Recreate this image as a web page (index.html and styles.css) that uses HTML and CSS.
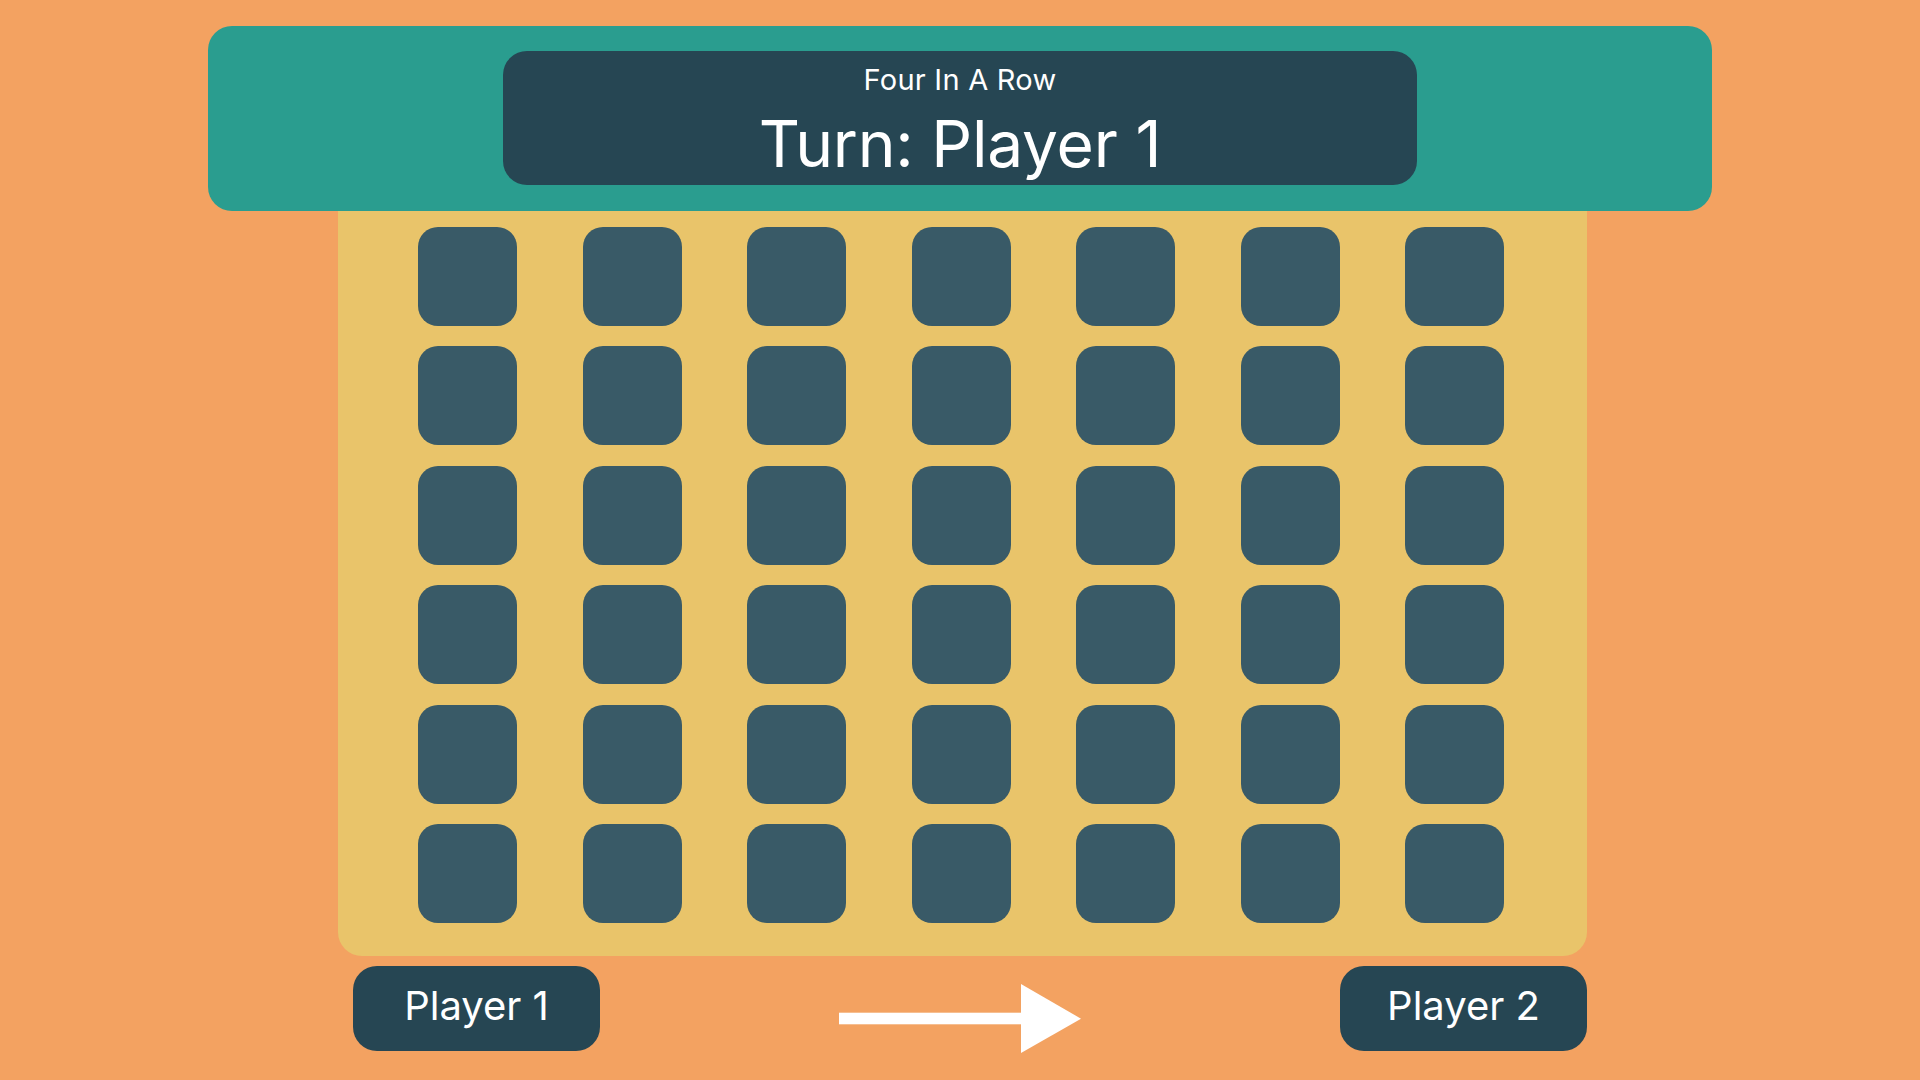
FILE: index.html
```html
<!DOCTYPE html>
<html lang="en">
<head>
<meta charset="utf-8">
<title>Four In A Row</title>
<link rel="stylesheet" href="styles.css">
</head>
<body>
<main class="app">
  <header class="top">
    <div class="title-box">
      <div class="title">Four In A Row</div>
      <div class="turn">Turn: Player 1</div>
    </div>
  </header>
  <section class="board">
    <div class="grid">
      <div class="cell"></div><div class="cell"></div><div class="cell"></div><div class="cell"></div><div class="cell"></div><div class="cell"></div><div class="cell"></div>
      <div class="cell"></div><div class="cell"></div><div class="cell"></div><div class="cell"></div><div class="cell"></div><div class="cell"></div><div class="cell"></div>
      <div class="cell"></div><div class="cell"></div><div class="cell"></div><div class="cell"></div><div class="cell"></div><div class="cell"></div><div class="cell"></div>
      <div class="cell"></div><div class="cell"></div><div class="cell"></div><div class="cell"></div><div class="cell"></div><div class="cell"></div><div class="cell"></div>
      <div class="cell"></div><div class="cell"></div><div class="cell"></div><div class="cell"></div><div class="cell"></div><div class="cell"></div><div class="cell"></div>
      <div class="cell"></div><div class="cell"></div><div class="cell"></div><div class="cell"></div><div class="cell"></div><div class="cell"></div><div class="cell"></div>
    </div>
  </section>
  <footer class="players">
    <div class="player">Player 1</div>
    <svg class="arrow" width="242" height="69" viewBox="0 0 242 69" aria-hidden="true">
      <rect x="0" y="28.7" width="183" height="11.6" fill="#ffffff"/>
      <polygon points="182,0 242,34.7 182,69" fill="#ffffff"/>
    </svg>
    <div class="player">Player 2</div>
  </footer>
</main>
</body>
</html>
```

FILE: styles.css
```css
* {
  box-sizing: border-box;
}

html, body {
  margin: 0;
  padding: 0;
}

body {
  background: #f3a261;
  font-family: Inter, "Noto Sans", "Liberation Sans", sans-serif;
  color: #ffffff;
  width: 1920px;
  height: 1080px;
  overflow: hidden;
}

.app {
  width: 1504px;
  margin: 0 auto;
  padding-top: 26px;
}

.top {
  position: relative;
  z-index: 1;
  background: #2a9d8f;
  border-radius: 24px;
  padding: 25px 0 26px;
  display: flex;
  justify-content: center;
}

.title-box {
  width: 914px;
  height: 134px;
  background: #264653;
  border-radius: 24px;
  padding-top: 11px;
  text-align: center;
}

.title {
  font-size: 29px;
  line-height: 35px;
  font-weight: 400;
  letter-spacing: 0.25px;
}

.turn {
  margin-top: 8px;
  font-size: 64px;
  line-height: 77px;
  font-weight: 400;
  letter-spacing: -0.2px;
}

.board {
  width: 1249px;
  margin-left: 130px;
  background: #e9c46a;
  border-radius: 0 0 24px 24px;
  padding: 16px 0 33px 80px;
}

.grid {
  display: grid;
  grid-template-columns: repeat(7, 99px);
  column-gap: 65.5px;
  row-gap: 20.4px;
}

.cell {
  width: 99px;
  height: 99px;
  background: #395a67;
  border-radius: 20px;
}

.players {
  margin: 10px 125px 0 145px;
  display: flex;
  justify-content: space-between;
  align-items: flex-start;
}

.player {
  width: 247px;
  height: 85px;
  background: #264653;
  border-radius: 24px;
  display: flex;
  align-items: center;
  justify-content: center;
  padding-bottom: 4px;
  font-size: 40px;
  line-height: 48px;
}

.arrow {
  display: block;
  margin-right: 20px;
  margin-top: 18px;
}
```
